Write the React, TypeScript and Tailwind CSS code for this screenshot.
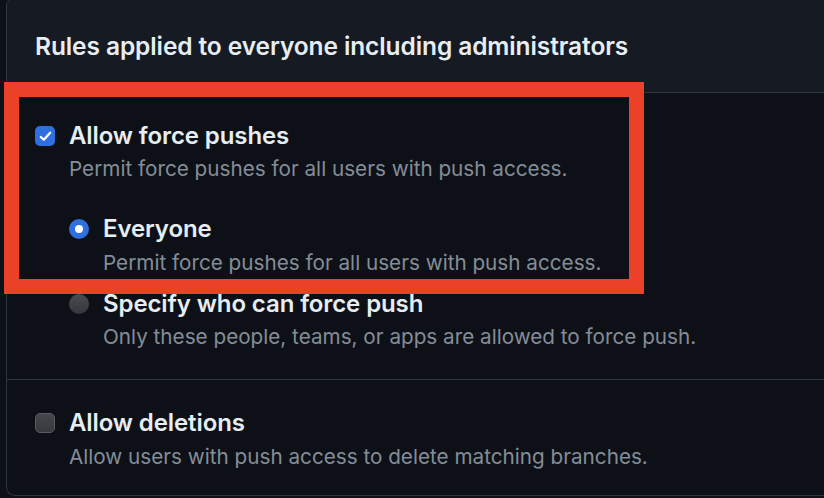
import React from 'react';

const font = { fontFamily: 'Inter, "Liberation Sans", sans-serif' };

const Checkbox: React.FC<{ checked?: boolean }> = ({ checked }) =>
  checked ? (
    <span className="mt-[4px] flex h-[20px] w-[20px] shrink-0 items-center justify-center rounded-[5px] bg-[#2f6fe0]">
      <svg viewBox="0 0 16 16" className="h-[15px] w-[15px]" fill="none" stroke="white" strokeWidth="2.4" strokeLinecap="round" strokeLinejoin="round">
        <path d="M3 8.5l3.2 3L13 4" />
      </svg>
    </span>
  ) : (
    <span className="mt-[4px] h-[20px] w-[20px] shrink-0 rounded-[5px] border border-[#5a5c62] bg-gradient-to-b from-[#45464b] to-[#38393e]" />
  );

const Radio: React.FC<{ checked?: boolean }> = ({ checked }) =>
  checked ? (
    <span className="mt-[4px] flex h-[20px] w-[20px] shrink-0 items-center justify-center rounded-full bg-[#2f6fe0]">
      <span className="h-[8px] w-[8px] rounded-full bg-white" />
    </span>
  ) : (
    <span className="mt-[4px] h-[20px] w-[20px] shrink-0 rounded-full bg-gradient-to-b from-[#4a4b50] to-[#36373c]" />
  );

const title = "text-[24px] font-semibold leading-[28px] tracking-[-0.1px] text-[#e6edf3]";
const desc = "text-[20.7px] leading-[28px] text-[#848d97]";

const App: React.FC = () => {
  return (
    <div className="relative h-[498px] w-[824px] overflow-hidden bg-[#0d1117] pl-[6px]" style={font}>
      <div className="-mt-[3px] h-[499px] overflow-hidden rounded-l-[9px] border border-r-0 border-[#30363d]">
        <div className="flex h-[95px] items-center border-b border-[#30363d] bg-[#161a22] pl-[28px] pt-[2px]">
          <h2 className="text-[24.5px] font-semibold tracking-[-0.1px] text-[#e6edf3]">Rules applied to everyone including administrators</h2>
        </div>

        <div className="border-b border-[#30363d] pb-[28px] pl-[28px] pt-[29px]">
          <div className="flex gap-[14px]">
            <Checkbox checked />
            <div>
              <div className={title}>Allow force pushes</div>
              <div className={`mt-[5px] ${desc}`}>Permit force pushes for all users with push access.</div>

              <div className="mt-[32px] flex gap-[14px]">
                <Radio checked />
                <div>
                  <div className={title}>Everyone</div>
                  <div className={`mt-[6px] ${desc}`}>Permit force pushes for all users with push access.</div>
                </div>
              </div>

              <div className="mt-[13px] flex gap-[14px]">
                <Radio />
                <div>
                  <div className={title}>Specify who can force push</div>
                  <div className={`mt-[5px] ${desc}`}>Only these people, teams, or apps are allowed to force push.</div>
                </div>
              </div>
            </div>
          </div>
        </div>

        <div className="pl-[28px] pt-[29px]">
          <div className="flex gap-[14px]">
            <Checkbox />
            <div>
              <div className={title}>Allow deletions</div>
              <div className={`mt-[6px] ${desc}`}>Allow users with push access to delete matching branches.</div>
            </div>
          </div>
        </div>
      </div>

      {/* annotation box */}
      <div className="pointer-events-none absolute left-[4px] top-[82px] h-[212px] w-[640px] border-[15px] border-[#ea4128]" />
    </div>
  );
};

export default App;
